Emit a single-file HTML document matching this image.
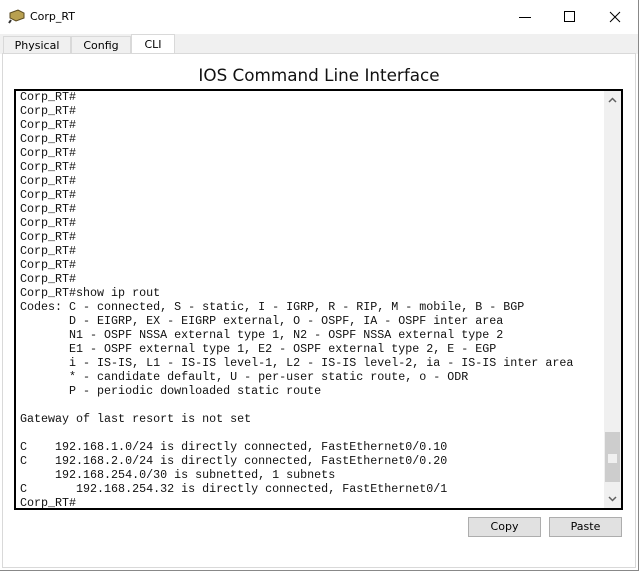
<!DOCTYPE html>
<html><head><style>
*{margin:0;padding:0;box-sizing:border-box}
body{width:642px;height:574px;background:#fff;position:relative;overflow:hidden;font-family:"DejaVu Sans",sans-serif}
.win{position:absolute;left:0;top:0;width:639px;height:571px;border-right:1px solid #888;border-bottom:1px solid #888;background:#fff}
.title{position:absolute;left:30px;top:10px;font-size:11px;color:#000}
.tabs{position:absolute;left:0;top:34px;width:638px;height:20px;background:#f0f0f0}
.tab{position:absolute;top:2px;height:18px;border:1px solid #d9d9d9;border-bottom:none;font-size:11px;line-height:17px;text-align:center;background:#f0f0f0}
.panel{position:absolute;left:2px;top:53px;width:634px;height:515px;border:1px solid #d9d9d9;background:#fff}
h1{position:absolute;left:0;width:638px;top:65px;text-align:center;font-weight:normal;font-size:16.8px;color:#111}
.term{position:absolute;left:14px;top:89px;width:609px;height:421px;border:2px solid #000;background:#fff;overflow:hidden}
pre{position:absolute;left:4px;top:-1px;font-family:"Liberation Mono",monospace;font-size:11.68px;line-height:14px;color:#111}
.sb{position:absolute;left:588px;top:0;width:17px;height:417px;background:#f0f0f0}
.thumb{position:absolute;left:1px;top:341px;width:15px;height:50px;background:#cdcdcd}
.btn{position:absolute;top:517px;height:20px;border:1px solid #adadad;background:#e1e1e1;font-size:11px;text-align:center;line-height:18px}
</style></head><body>
<div class="win">
<svg style="position:absolute;left:8px;top:8px" width="18" height="16"><path d="M2 5 L10 2 L16 5 L16 10 L8 13 L2 10Z" fill="#b8a050" stroke="#5a4a20"/><path d="M3 12 L1 15" stroke="#333" stroke-width="2"/></svg>
<div class="title">Corp_RT</div>
<svg style="position:absolute;left:518px;top:10px" width="110" height="16"><path d="M1 7.5H13" stroke="#000"/><rect x="46.5" y="1.5" width="10" height="10" fill="none" stroke="#000"/><path d="M92 2L102 12M102 2L92 12" stroke="#000"/></svg>
<div class="tabs">
<div class="tab" style="left:3px;width:68px">Physical</div>
<div class="tab" style="left:71px;width:60px">Config</div>
<div class="tab" style="left:131px;width:44px;top:0;height:20px;background:#fff;line-height:19px">CLI</div>
</div>
<div class="panel"></div>
<h1>IOS Command Line Interface</h1>
<div class="term"><pre>Corp_RT#
Corp_RT#
Corp_RT#
Corp_RT#
Corp_RT#
Corp_RT#
Corp_RT#
Corp_RT#
Corp_RT#
Corp_RT#
Corp_RT#
Corp_RT#
Corp_RT#
Corp_RT#
Corp_RT#show ip rout
Codes: C - connected, S - static, I - IGRP, R - RIP, M - mobile, B - BGP
       D - EIGRP, EX - EIGRP external, O - OSPF, IA - OSPF inter area
       N1 - OSPF NSSA external type 1, N2 - OSPF NSSA external type 2
       E1 - OSPF external type 1, E2 - OSPF external type 2, E - EGP
       i - IS-IS, L1 - IS-IS level-1, L2 - IS-IS level-2, ia - IS-IS inter area
       * - candidate default, U - per-user static route, o - ODR
       P - periodic downloaded static route

Gateway of last resort is not set

C    192.168.1.0/24 is directly connected, FastEthernet0/0.10
C    192.168.2.0/24 is directly connected, FastEthernet0/0.20
     192.168.254.0/30 is subnetted, 1 subnets
C       192.168.254.32 is directly connected, FastEthernet0/1
Corp_RT#</pre>
<div class="sb"><svg style="position:absolute;left:4px;top:6px" width="9" height="6"><path d="M1 5L4.5 1.5L8 5" fill="none" stroke="#606060" stroke-width="1.5"/></svg>
<div class="thumb"><div style="position:absolute;left:3px;top:22px;width:9px;height:9px;background:#f0f0f0"></div></div>
<svg style="position:absolute;left:4px;top:405px" width="9" height="6"><path d="M1 1L4.5 4.5L8 1" fill="none" stroke="#606060" stroke-width="1.5"/></svg></div>
</div>
<div class="btn" style="left:468px;width:73px">Copy</div>
<div class="btn" style="left:549px;width:73px">Paste</div>
</div>
</body></html>
